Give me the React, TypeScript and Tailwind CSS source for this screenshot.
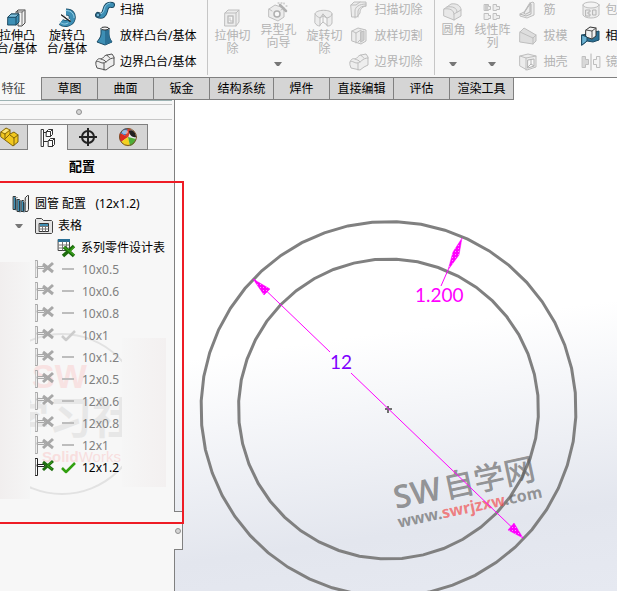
import { useState } from "react";
import type { ReactNode } from "react";
import clsx from "clsx";

type IconProps = { children: ReactNode; w?: number; h?: number; className?: string };

function Icon({ children, w = 18, h = 18, className }: IconProps) {
	return (
		<svg
			width={w}
			height={h}
			viewBox={`0 0 ${w} ${h}`}
			fill="none"
			strokeLinejoin="round"
			strokeLinecap="round"
			className={clsx("shrink-0", className)}
			aria-hidden="true"
		>
			{children}
		</svg>
	);
}

const BLUE = "#3d8fb5";
const DARK = "#1c4a63";
const PALE = "#bebebe";

const ExtrudeIcon = () => (
	<Icon w={20} h={20}>
		<path d="M9 4l2-2h7v13l-3 3h-4V4z" fill="#f4f4f4" stroke="#444" />
		<path d="M15 4l3-2M15 4v13M9 4h6" stroke="#777" />
		<path d="M1 9l3-3h8v8l-3 3H1z" fill={BLUE} stroke={DARK} />
		<path d="M1 9l3-3h8l-3 3z" fill="#7fc1dd" stroke={DARK} />
		<path d="M9 9v8" stroke={DARK} />
	</Icon>
);

const RevolveIcon = () => (
	<Icon w={20} h={20}>
		<path d="M9 4c5 0 7 3 6 7s-7 6-11 3" stroke={DARK} strokeWidth="7" strokeLinecap="butt" />
		<path d="M9 4c5 0 7 3 6 7s-7 6-11 3" stroke={BLUE} strokeWidth="5.500" strokeLinecap="butt" />
		<path d="M9 2.500c6 0 8 4 8 7M3 14c2 2 5 3 8 1" stroke="#9bd2e8" />
		<path d="M5 7l8 6" stroke="#222" strokeWidth="2" />
		<path d="M5 6l8 6" stroke="#fff" />
	</Icon>
);

const SweepIcon = () => (
	<Icon w={20} h={18}>
		<path d="M3 14c4 2 6 0 7-4 1-5 3-7 7-6" stroke={DARK} strokeWidth="6" />
		<path d="M3 14c4 2 6 0 7-4 1-5 3-7 7-6" stroke={BLUE} strokeWidth="4" />
		<path d="M4 13c3 0 4-1 5-4 1-4 2-6 6-7" stroke="#8fcbe3" />
		<circle cx="3" cy="14" r="2" fill="#6fb5d4" stroke={DARK} />
	</Icon>
);

const LoftIcon = () => (
	<Icon w={18} h={20}>
		<path d="M5 3v5c0 3-2 5-4 8l8 3 7-3c-2-3-3-5-3-8V3z" fill={BLUE} stroke={DARK} />
		<path d="M9 4v15l7-3c-2-3-3-5-3-8V4z" fill="#2b7196" />
		<ellipse cx="9" cy="2.5" rx="4" ry="1.5" fill="#f4f4f4" stroke="#333" />
	</Icon>
);

function BoundaryIcon({ color = "#555" }: { color?: string }) {
	return (
		<Icon w={20} h={18}>
			<path d="M1 9c1-3 3-4 5-3 2 0 3-4 6-4l5-1 2 3v8l-4 2-4 3-9-2-1-3z" fill="#eee" stroke={color} />
			<path d="M1 9c2-2 4 1 7 1 4 0 5-5 11-5M6 6c2 1 4 1 5 3M12 2c1 2 2 2 3 3" stroke={color} />
			<path d="M9 10v7" stroke={color} />
		</Icon>
	);
}

const CutExtrudeIcon = () => (
	<Icon w={18} h={18}>
		<path d="M2 4l3-3h11v12l-3 4H2z" fill="#ececec" stroke={PALE} />
		<path d="M2 4h11l3-3M13 4v13" stroke={PALE} />
		<path d="M5 7h5v7H5z" fill="#f8f8f8" stroke={PALE} strokeWidth="1.5" />
		<path d="M7 9v3h3" stroke={PALE} />
	</Icon>
);

const HoleIcon = () => (
	<Icon w={20} h={20}>
		<path d="M1 7l6-4 9 3v9l-6 4-9-4z" fill="#ececec" stroke={PALE} />
		<path d="M1 7l3 2M16 6l-3 2" stroke={PALE} />
		<circle cx="9" cy="12" r="3" fill="#f8f8f8" stroke="#b0b0b0" strokeWidth="1.5" />
		<path d="M12 3l6 6" stroke="#b0b0b0" strokeWidth="2.500" />
		<path d="M13 1h1M16 1v1M18 4h1M10 1h1" stroke="#b0b0b0" />
	</Icon>
);

const CutRevolveIcon = () => (
	<Icon w={20} h={18}>
		<path d="M1 5c0-5 17-5 17 0v9c-1 3-3 3-5 3V9L9 7 6 9v8c-2 0-4-1-5-3z" fill="#ececec" stroke={PALE} />
		<path d="M1 5c1 2 3 3 5 4l3-4 4 4c3-1 5-2 5-4M9 5v8M6 16l3-3 4 3" stroke={PALE} />
	</Icon>
);

const CutSweepIcon = () => (
	<Icon w={18} h={18}>
		<path d="M1 4l3-3h12v4c-5 1-6 4-6 7l-3 4H2z" fill="#ececec" stroke={PALE} />
		<path d="M1 4h5l4-3M5 17V10c0-4 4-7 11-7M8 16v-6c1-3 3-5 8-5" stroke={PALE} />
	</Icon>
);

const CutLoftIcon = () => (
	<Icon w={18} h={18}>
		<path d="M2 4l6-3 8 2v11l-5 3-9-3z" fill="#ececec" stroke={PALE} />
		<path d="M2 4l4 2v10M6 6l5-3v9l-3 3" stroke={PALE} />
		<path d="M11 5l3-1v9l-3 2z" fill="#cfcfcf" stroke={PALE} />
	</Icon>
);

const FilletIcon = () => (
	<Icon w={20} h={20}>
		<path d="M1 7l7-5c6-1 10 2 10 6v6l-7 4-10-4z" fill="#e8e8e8" stroke={PALE} />
		<path d="M1 7c6-1 10 1 10 6v5M11 12l7-4M4 5c6-1 10 1 10 5" stroke={PALE} />
	</Icon>
);

const PatternIcon = () => (
	<Icon w={18} h={18}>
		<path
			d="M1.500 1.500h4v2h2v3h-2v1h-4zM10.500 1.500h3v2h3v3h-3v1h-3zM1.500 10.500h4v2h2v3h-2v1h-4zM10.500 10.500h3v2h3v3h-3v1h-3z"
			fill="#eee"
			stroke={PALE}
		/>
		<path d="M2 2h3v5H2z" fill="#ccc" />
	</Icon>
);

const RibIcon = () => (
	<Icon w={18} h={18}>
		<path d="M11 2l3-1 1 1v12l-7 3-7-2v-2l4-2z" fill="#ececec" stroke={PALE} />
		<path d="M11 2l1 1v10l-5 2-6-2M5 12l6-9v8l-4 2z" stroke="#b4b4b4" />
	</Icon>
);

const DraftIcon = () => (
	<Icon w={18} h={18}>
		<path d="M1 5l4-4 12 7v6l-3 3-13-2z" fill="#dedede" stroke={PALE} />
		<path d="M1 5l13 6v6M14 11l3-3" stroke={PALE} />
	</Icon>
);

const ShellIcon = () => (
	<Icon w={18} h={18}>
		<path d="M1 3l8-2 8 2v11l-9 3-7-4z" fill="#ececec" stroke={PALE} />
		<path d="M1 3l6 2 10-2M7 5v12" stroke={PALE} />
		<path d="M9 7l6-1v7l-6 2z" fill="#f8f8f8" stroke="#b4b4b4" />
		<path d="M9 14l3-3 3 2M12 11V7" stroke="#b4b4b4" />
	</Icon>
);

const WrapIcon = () => (
	<Icon w={20} h={18}>
		<path d="M2 4v10c2 4 14 4 16 0V4" fill="#ececec" stroke={PALE} />
		<ellipse cx="10" cy="4" rx="8" ry="3" fill="#f4f4f4" stroke={PALE} />
		<path d="M5 9h4v2H7v2h2v2H5zM12 9h3v5h-3z" stroke="#b4b4b4" />
	</Icon>
);

const IntersectIcon = () => (
	<Icon w={20} h={20}>
		<path d="M1 9l5-1 12-3v9l-6 2-6-1-5 4z" fill="#2b7196" stroke={DARK} />
		<path d="M5 4l4-3 6 1v8l-4 3-6-2z" fill="#f1f1f1" stroke="#333" />
		<path d="M5 4l6 1v8M11 5l4-3" stroke="#555" />
		<path d="M1 9l5 2v4l-5 4z" fill="#6cb4d4" stroke={DARK} />
	</Icon>
);

const MirrorIcon = () => (
	<Icon w={20} h={18}>
		<path d="M1.500 3.500h3v3h3v5h-3v3h-3z" fill="#d8d8d8" stroke={PALE} />
		<path d="M18.500 3.500h-3v3h-3v5h3v3h3z" fill="#f4f4f4" stroke={PALE} />
		<path d="M10 1v16" stroke="#b4b4b4" />
	</Icon>
);

function Caret({ className }: { className?: string }) {
	return (
		<svg width="8" height="5" viewBox="0 0 8 5" className={clsx("shrink-0", className)} aria-hidden="true">
			<path d="M0 0h8L5 4H3z" fill="#777" />
		</svg>
	);
}

type BigButtonProps = { icon: ReactNode; lines: string[]; disabled?: boolean; menu?: boolean; className?: string };

function BigButton({ icon, lines, disabled, menu, className }: BigButtonProps) {
	return (
		<button
			disabled={disabled}
			className={clsx(
				"flex shrink-0 flex-col items-center leading-[13px] whitespace-nowrap",
				disabled ? "text-[#b3b3b3]" : "text-black",
				className,
			)}
		>
			<span className="mb-px flex h-5 items-center">{icon}</span>
			{lines.map((line) => (
				<span key={line}>{line}</span>
			))}
			{menu && <Caret className="mt-auto mb-[10px]" />}
		</button>
	);
}

type SmallItem = { icon: ReactNode; label: string; enabled?: boolean };

function SmallList({ items, className }: { items: SmallItem[]; className?: string }) {
	return (
		<div className={clsx("-mt-[3px] flex shrink-0 flex-col", className)}>
			{items.map((item) => (
				<button
					key={item.label}
					disabled={!item.enabled}
					className={clsx(
						"flex h-[26px] items-center gap-[5px] whitespace-nowrap",
						item.enabled ? "text-black" : "text-[#b3b3b3]",
					)}
				>
					<span className="flex w-5 justify-center">{item.icon}</span>
					{item.label}
				</button>
			))}
		</div>
	);
}

const bossItems: SmallItem[] = [
	{ icon: <SweepIcon />, label: "扫描", enabled: true },
	{ icon: <LoftIcon />, label: "放样凸台/基体", enabled: true },
	{ icon: <BoundaryIcon />, label: "边界凸台/基体", enabled: true },
];

const cutItems: SmallItem[] = [
	{ icon: <CutSweepIcon />, label: "扫描切除" },
	{ icon: <CutLoftIcon />, label: "放样切割" },
	{ icon: <BoundaryIcon color="#bdbdbd" />, label: "边界切除" },
];

const featureItems: SmallItem[] = [
	{ icon: <RibIcon />, label: "筋" },
	{ icon: <DraftIcon />, label: "拔模" },
	{ icon: <ShellIcon />, label: "抽壳" },
];

const moreItems: SmallItem[] = [
	{ icon: <WrapIcon />, label: "包覆" },
	{ icon: <IntersectIcon />, label: "相交", enabled: true },
	{ icon: <MirrorIcon />, label: "镜向" },
];

function Ribbon() {
	return (
		<div className="flex h-[78px] shrink-0 overflow-hidden border-b border-[#808080] bg-[#f7f7f7]">
			<BigButton className="-ml-1 w-[42px] pt-2" icon={<ExtrudeIcon />} lines={["拉伸凸", "台/基体"]} />
			<BigButton className="ml-2 w-[42px] pt-2" icon={<RevolveIcon />} lines={["旋转凸", "台/基体"]} />
			<SmallList className="ml-[7px]" items={bossItems} />
			<div className="ml-[11px] h-[75px] w-px shrink-0 bg-[#c6c6c6]" />
			<BigButton className="ml-1 w-10 pt-2" disabled icon={<CutExtrudeIcon />} lines={["拉伸切", "除"]} />
			<BigButton className="ml-[6px] w-10 pt-[2px]" disabled menu icon={<HoleIcon />} lines={["异型孔", "向导"]} />
			<BigButton className="ml-[6px] w-10 pt-2" disabled icon={<CutRevolveIcon />} lines={["旋转切", "除"]} />
			<SmallList className="ml-[5px]" items={cutItems} />
			<div className="ml-3 h-[75px] w-px shrink-0 bg-[#c6c6c6]" />
			<BigButton className="w-9 pt-[2px]" disabled menu icon={<FilletIcon />} lines={["圆角"]} />
			<BigButton className="ml-[2px] w-[38px] pt-[2px]" disabled menu icon={<PatternIcon />} lines={["线性阵", "列"]} />
			<SmallList className="ml-[7px]" items={featureItems} />
			<SmallList className="ml-[13px]" items={moreItems} />
		</div>
	);
}

const ribbonTabs = [
	{ label: "特征", width: "w-[42px] pr-[14px]" },
	{ label: "草图", width: "w-14" },
	{ label: "曲面", width: "w-14" },
	{ label: "钣金", width: "w-14" },
	{ label: "结构系统", width: "w-16" },
	{ label: "焊件", width: "w-14" },
	{ label: "直接编辑", width: "w-16" },
	{ label: "评估", width: "w-14" },
	{ label: "渲染工具", width: "w-16" },
];

function RibbonTabs() {
	const [active, setActive] = useState("特征");
	return (
		<div className="-mt-px flex h-[23px] shrink-0" role="tablist">
			{ribbonTabs.map(({ label, width }) => (
				<button
					key={label}
					role="tab"
					aria-selected={active === label}
					onClick={() => setActive(label)}
					className={clsx(
						"flex shrink-0 items-center justify-center border-r border-[#808080] whitespace-nowrap",
						width,
						active === label ? "bg-[#f7f7f7] text-[#444]" : "border-t border-b bg-[#d5d5d5] text-black",
					)}
				>
					{label}
				</button>
			))}
		</div>
	);
}

const PartIcon = () => (
	<Icon w={20} h={20}>
		<path d="M1 5l5-4 4 2v4l4-2 4 3v7l-5 4L1 10z" fill="#f2c81e" stroke="#80640a" />
		<path d="M1 5l4 2v5M5 7l5-4M5 12l5-5M10 8l4 3v7M14 11l4-3" stroke="#80640a" />
		<path d="M2 5l4-3 3 1-4 3z" fill="#fbe783" />
	</Icon>
);

const ConfigTabIcon = () => (
	<Icon w={16} h={20}>
		<path d="M1.500 1.500h2v17h-2zM3.500 4.500h3M3.500 13.500h4" fill="#fff" stroke="#333" />
		<path d="M6.500 3.500l2-2h4v5l-2 2h-4zM6.500 3.500h4v5M10.500 3.500l2-2" fill="#fff" stroke="#333" />
		<path d="M8.500 12.500l2-2h4v6l-2 2h-4zM8.500 12.500h4v6M12.500 12.500l2-2" fill="#fff" stroke="#333" />
	</Icon>
);

const TargetIcon = () => (
	<Icon w={20} h={20}>
		<circle cx="10" cy="10" r="6" stroke="#222" strokeWidth="2" />
		<path d="M10 1v18M1 10h18" stroke="#222" strokeWidth="2" strokeLinecap="butt" />
	</Icon>
);

const AppearanceIcon = () => (
	<Icon w={20} h={20}>
		<circle cx="10" cy="10" r="9" fill="#e8e8e8" />
		<path d="M10 10L2 6A9 9 0 0 1 10 1z" fill="#3578c8" />
		<path d="M10 10L2 6a9 9 0 0 0 1 9z" fill="#dc2b20" />
		<path d="M10 1L7 9l3 2 3-9z" fill="#d94132" />
		<path d="M10 10l-7 5a9 9 0 0 0 9 4z" fill="#f4d21f" />
		<path d="M10 10l2 9a9 9 0 0 0 6-7z" fill="#4eae38" />
		<path d="M11 4c3-2 7 1 7 6-3 1-7-2-7-6z" fill="#222" />
		<circle cx="10" cy="10" r="8.500" stroke="#76512b" />
		<ellipse cx="7" cy="5" rx="3" ry="2" fill="#fff" opacity=".5" />
	</Icon>
);

const panelTabs = [
	{ id: "FeatureManager", icon: <PartIcon />, width: "w-7 pr-2" },
	{ id: "ConfigurationManager", icon: <ConfigTabIcon />, width: "w-10" },
	{ id: "DimXpertManager", icon: <TargetIcon />, width: "w-10" },
	{ id: "DisplayManager", icon: <AppearanceIcon />, width: "w-10" },
];

function PanelTabs() {
	const [active, setActive] = useState("ConfigurationManager");
	return (
		<div className="mr-[2px] flex h-[26px]" role="tablist">
			{panelTabs.map(({ id, icon, width }) => (
				<button
					key={id}
					role="tab"
					aria-label={id}
					aria-selected={active === id}
					onClick={() => setActive(id)}
					className={clsx(
						"flex shrink-0 items-center justify-center border-t border-r border-[#808080]",
						width,
						active !== id && "border-b bg-[#d5d5d5]",
					)}
				>
					{icon}
				</button>
			))}
			<div className="flex-1 border-b border-[#b0b0b0]" />
		</div>
	);
}

const BooksIcon = () => (
	<Icon w={18} h={18}>
		<path d="M1.500 1.500h2v13h-2zM5.500 4.500h2v12h-2zM9.500 5.500h2v11h-2z" fill={BLUE} stroke="#333" />
		<path d="M13.500 2.500l2-2h1v14l-1 2h-2z" fill="#eee" stroke="#333" />
		<path d="M3.500 2.500h2M7.500 5.500h2M11.500 6.500h2" stroke="#999" />
		<path d="M4 4v11M8 6v11M12 8v9" stroke={DARK} />
	</Icon>
);

const FolderIcon = () => (
	<Icon w={18} h={18}>
		<path d="M.5 15.500v-13l1-1h5l2 2h8l1 1v11l-1 1h-15z" fill="#e4e4e4" stroke="#444" />
		<path d="M4.500 6.500h9v8h-9z" fill="#fff" stroke="#333" />
		<path d="M5 7h8v2H5z" fill={BLUE} />
		<path d="M5 9.500h8M5 12h8M7.500 9v5M10.500 9v5" stroke="#777" />
	</Icon>
);

const TableIcon = () => (
	<Icon w={19} h={20}>
		<path d="M1.500 1.500h11v11h-11z" fill="#fff" stroke="#444" />
		<path d="M1 1h12v3H1z" fill="#286f96" />
		<path d="M2 7h10M2 10h10M5.500 4v8M9.500 4v8" stroke="#777" />
		<path d="M7 9l10 9M17 8L6 18" stroke="#1c6b0d" strokeWidth="3.500" strokeLinecap="butt" />
		<path d="M7 9l10 8M13 13l4-4" stroke="#38a018" strokeLinecap="butt" strokeWidth="1.500" />
	</Icon>
);

function ConfigIcon({ active }: { active: boolean }) {
	return (
		<Icon w={19} h={20}>
			<path d="M.5.5h2v17h-2zM2.500 6.500h7v2h-7z" fill={active ? "#fff" : "#eee"} stroke={active ? "#222" : "#a8a8a8"} />
			<path d="M8 4l10 8M18 3l-10 9" stroke={active ? "#1f6d10" : "#a8a8a8"} strokeWidth="3" strokeLinecap="butt" />
			{active && <path d="M12 8l5-4M13 8l4 3" stroke="#37a315" strokeLinecap="butt" />}
		</Icon>
	);
}

function StateMark({ kind, active }: { kind: "dash" | "check"; active: boolean }) {
	return (
		<Icon w={16} h={14}>
			{kind === "check" ? (
				<path d="M1 7l4 4 9-9" stroke={active ? "#32a010" : "#ccc"} strokeWidth="2.500" strokeLinecap="butt" />
			) : (
				<path d="M1 6h12" stroke="#bdbdbd" strokeWidth="2" strokeLinecap="butt" />
			)}
		</Icon>
	);
}

const configs = ["10x0.5", "10x0.6", "10x0.8", "10x1", "10x1.2", "12x0.5", "12x0.6", "12x0.8", "12x1", "12x1.2"];
const computed = ["10x1", "12x1.2"];

function StampWatermark() {
	return (
		<>
			<svg className="pointer-events-none absolute top-[144px] left-[30px]" width="92" height="176" viewBox="30 328 92 176" aria-hidden="true">
				<circle cx="62" cy="415" r="80" fill="none" stroke="#e2e2e2" strokeWidth="2" />
				<g fontWeight="700">
					<text x="32" y="389" fontSize="34" fill="#f8e2e2" fontFamily="Liberation Sans">SW</text>
					<text x="6" y="435" fontSize="43" fill="#e7e7e7" fontFamily="Noto Sans CJK SC">学习社</text>
					<text x="42" y="463" fontSize="15" fill="#f8dede" fontFamily="Liberation Sans">
						Solid<tspan fontWeight="400">Works</tspan>
					</text>
				</g>
			</svg>
			<div className="pointer-events-none absolute top-[79px] left-0 h-[237px] w-[30px] bg-linear-to-r from-[#f1eeee] to-[#f5f5f5]" />
			<div className="pointer-events-none absolute top-[155px] left-[122px] h-[149px] w-11 bg-linear-to-r from-[#f6f6f6] to-[#f3f0f0]" />
		</>
	);
}

function ConfigTree() {
	const [selected, setSelected] = useState("12x1.2");
	return (
		<div className="relative z-10 min-h-[343px] w-[184px] border-2 border-l-0 border-[#ee1c25] pt-[10px]">
			<StampWatermark />
			<ul className="relative text-black">
				<li className="flex h-[22px] items-center gap-[5px] pl-3 whitespace-pre">
					<BooksIcon />
					{"圆管 配置   (12x1.2)"}
				</li>
				<li className="flex h-[22px] items-center pl-[15px]">
					<Caret />
					<span className="ml-3 flex items-center gap-[5px]">
						<FolderIcon />
						表格
					</span>
				</li>
				<li className="flex h-[22px] items-center gap-[5px] pl-[57px]">
					<TableIcon />
					系列零件设计表
				</li>
				{configs.map((name) => {
					const active = name === selected;
					return (
						<li key={name}>
							<button
								onClick={() => setSelected(name)}
								className={clsx("flex h-[22px] items-center pl-[35px]", active ? "text-black" : "text-[#808080]")}
							>
								<ConfigIcon active={active} />
								<span className="ml-[7px]">
									<StateMark kind={computed.includes(name) ? "check" : "dash"} active={active} />
								</span>
								<span className="ml-[5px]">{name}</span>
							</button>
						</li>
					);
				})}
			</ul>
		</div>
	);
}

function Knob() {
	return <span className="block size-[6px] rounded-full border border-[#909090] bg-[#d5d5d5]" />;
}

function SidePanel() {
	return (
		<aside className="relative z-10 w-[175px] shrink-0 border-r border-[#808080] bg-[#f7f7f7]">
			<div className="mr-[2px] h-[5px] border-t border-b border-t-[#9db3b3] border-b-[#c6c6c6]" />
			<div className="mr-[2px] flex h-[15px] items-center justify-center border-b border-[#c6c6c6] pr-[15px]">
				<Knob />
			</div>
			<div className="pt-1">
				<PanelTabs />
			</div>
			<h2 className="flex h-[31px] items-center justify-center pt-px pr-[10px] text-[13px] font-bold text-black">配置</h2>
			<div className="absolute top-[411px] left-[174px] flex h-[39px] w-[9px] items-center justify-center border border-l-0 border-[#808080] bg-[#f7f7f7]">
				<Knob />
			</div>
			<ConfigTree />
		</aside>
	);
}

// Circles are tessellated the way the viewport draws them, as short straight edges.
function ring(radius: number, segments: number, offset: number) {
	return Array.from({ length: segments }, (_, i) => {
		const a = ((i * 360) / segments + offset) * (Math.PI / 180);
		return `${(213.5 + radius * Math.sin(a)).toFixed(1)},${(309 - radius * Math.cos(a)).toFixed(1)}`;
	}).join(" ");
}

function Viewport() {
	return (
		<main className="min-w-0 flex-1">
			<svg viewBox="0 0 442 491" preserveAspectRatio="xMinYMin slice" className="block h-full w-full" role="img" aria-label="圆管草图">
				<defs>
					<pattern id="hatch" width="3" height="3" patternUnits="userSpaceOnUse">
						<path d="M0 0h3v3H0z" fill="#ff00ff" />
						<path d="M1 1h1v1H1z" fill="#ff90ff" />
					</pattern>
				</defs>
				<g fill="none" stroke="#808080" strokeWidth="3">
					<polygon points={ring(187.5, 48, 2.5)} />
					<polygon points={ring(150, 44, 3)} />
				</g>
				<g transform="translate(221 409) rotate(-12)" fontFamily="Noto Sans, Noto Sans CJK SC, sans-serif" fill="#606060" fillOpacity=".65">
					<text fontSize="32" fontWeight="600">
						SW<tspan x="51" fontSize="31" fontWeight="500">自学网</tspan>
					</text>
					<text x="-1" y="19" fontSize="16" fontWeight="700">
						www.<tspan fill="#f24040">swrjzxw</tspan>.com
					</text>
				</g>
				<path d="M213 306v7M210 309h7" stroke="#707070" strokeWidth="2" />
				<path d="M79 179L155 252M176 273L348 438M273 170l-7 16" fill="none" stroke="#ff00ff" />
				<g stroke="#ff00ff" strokeWidth=".5" fill="url(#hatch)">
					<path d="M78 179l17 10-6 6zM348 438l-15-8 6-7zM287 138l-9 14-5 18 11-15z" />
				</g>
				<g fontFamily="Lato, sans-serif" fontSize="19">
					<text x="155" y="269" fill="#8000ff">12</text>
					<text x="240" y="202" fill="#ff00ff">1.200</text>
				</g>
			</svg>
		</main>
	);
}

export default function App() {
	return (
		<div className="flex h-screen flex-col overflow-hidden bg-[linear-gradient(172deg,#fff_57%,#e3e6ee_87%,#e6e9f1)] font-['Noto_Sans','Noto_Sans_CJK_SC',sans-serif] text-[12px] leading-4">
			<Ribbon />
			<RibbonTabs />
			<div className="flex min-h-0 flex-1">
				<SidePanel />
				<Viewport />
			</div>
		</div>
	);
}
